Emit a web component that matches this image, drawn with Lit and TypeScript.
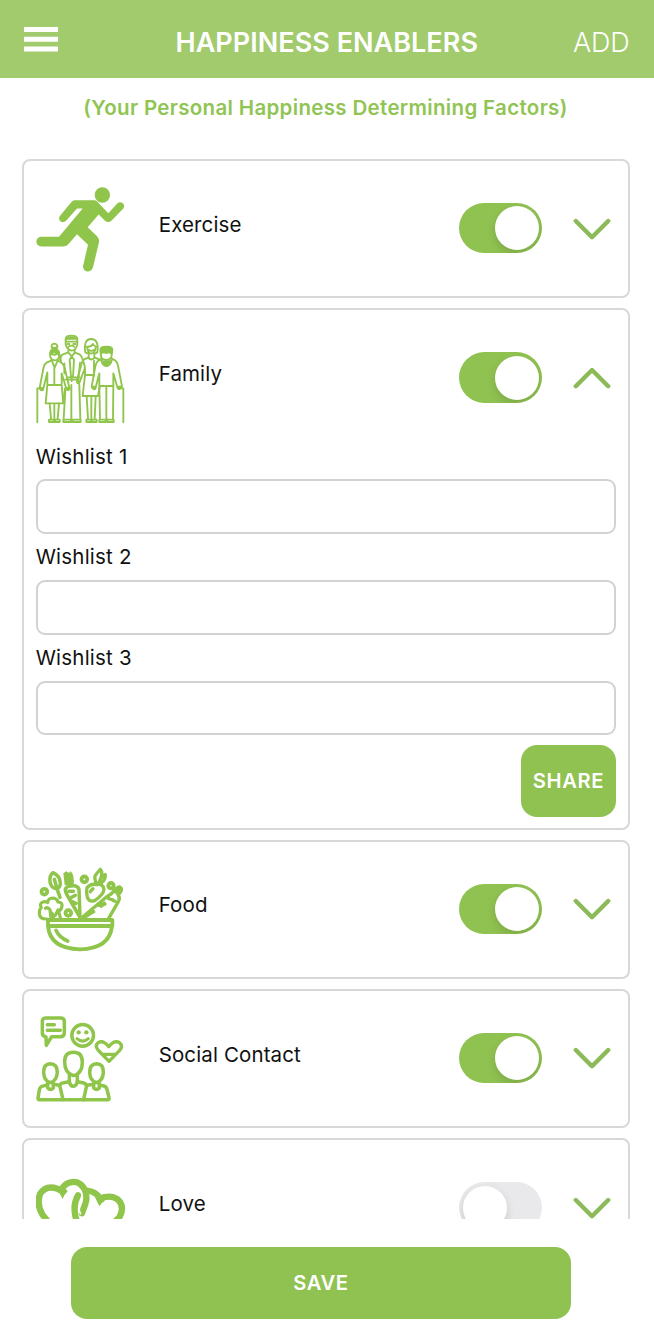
import { LitElement, html, svg, css } from "lit";
import { customElement, property, state } from "lit/decorators.js";
import { classMap } from "lit/directives/class-map.js";

const icons: Record<string, { box: string; art: unknown }> = {
  exercise: {
    box: "48 103.5 270 270",
    art: svg`
      <circle class="fill" cx="247" cy="133.500" r="23"/>
      <path class="fill" d="M163 149H225Q231 151 236 158L265 188L291 160Q298 153 307 157Q316 164 310 174L275 210Q265 219 255 211L236 192L203 230L232 258Q238 265 237 275L219 350Q214 363 203 363Q189 361 189 347L204 283L171 251L145 281Q139 288 129 288H64Q50 287 49 274Q50 261 63 259H117L188 174H171L139 210Q131 218 123 214Q114 207 119 197L155 154Q158 150 163 149Z"/>`,
  },
  family: {
    box: "33 27 270 270",
    art: svg`
      <g class="line" stroke-width="5.600">
        <path d="M37 292V190H48M295 292V190H284"/>
        <path d="M75 90Q74 72 88 72Q103 72 103 90Q102 106 89 106Q76 105 75 90ZM80 68Q78 57 88 56Q98 57 97 68ZM76 85Q88 95 102 83"/>
        <path d="M99 84L107 100M104 90L108 108"/>
        <path d="M80 106L65 113Q58 117 56 126L44 188Q47 198 54 195L67 142V180L62 235H115L110 180V145L124 191Q128 199 134 192L119 128Q116 115 98 107L89 128L80 106ZM67 180H110M88 130V180"/>
        <path d="M74 235L78 281M102 235L98 281M88 237V280M72 284H86V291H72ZM90 284H104V291H90Z"/>
        <path d="M122 42Q122 32 139 32Q157 32 157 42V58Q153 76 140 77Q126 75 122 58ZM122 50H157M131 65Q140 59 148 65M128 57H133M145 57H151"/>
        <path d="M130 76V82L112 89Q107 94 105 104M149 76V82L165 89Q171 94 173 104M130 82L140 94L150 82M140 94L134 104L138 156H144L147 104L140 94"/>
        <path d="M118 115V145M121 164H160M130 157H164M140 156V168M165 113L160 165M121 196L116 281M139 180V281M163 180L166 281M115 284H138V291H115ZM143 284H167V291H143ZM120 190L115 230"/>
        <path d="M181 82Q175 43 198 42Q223 43 217 82L208 87V97L224 104M181 82L191 87V97L176 104M184 65Q198 67 204 57Q207 64 214 65M187 66Q187 84 199 86Q211 84 212 66M192 75Q199 80 206 75"/>
        <path d="M176 104Q170 109 169 119L156 165Q155 175 162 176L180 129V150L173 213H219L224 184M180 150H207M180 129L176 112M207 107V153M190 98Q199 109 209 98"/>
        <path d="M185 215L189 281M212 215L209 281M199 217V280M184 284H198V291H184ZM201 284H215V291H201Z"/>
        <path d="M226 76Q225 65 244 65Q264 65 262 76L259 97Q254 105 244 105Q232 104 229 97ZM226 76Q244 90 262 76"/>
        <path d="M229 101L218 109Q213 114 211 124L200 185Q205 196 211 191L223 145V183L225 281M260 101L270 106Q277 111 279 122L291 184Q284 197 278 190L265 145V183L264 281M223 183H265M244 185V281M229 106Q232 122 244 123Q257 122 260 106"/>
        <path d="M223 284H242V291H223ZM247 284H266V291H247Z"/>
      </g>
      <path class="fill" d="M75 87Q76 73 89 72Q102 74 103 87L98 84L93 88L87 84L81 89ZM122 44V39Q139 29 157 39V44ZM226 88V71Q226 63 244 63Q264 63 264 75L261 90L253 85H236ZM231 104Q244 112 258 103Q257 121 244 122Q233 120 231 104Z"/>
      <circle class="fill" cx="49" cy="191" r="5.500"/><circle class="fill" cx="129" cy="191" r="5.500"/><circle class="fill" cx="160" cy="171" r="5.500"/><circle class="fill" cx="206" cy="187" r="5.500"/><circle class="fill" cx="284" cy="187" r="5.500"/>`,
  },
  food: {
    box: "33 30 270 270",
    art: svg`
      <g class="line" stroke-width="11.500">
        <path d="M69 195H262V213H69ZM69 213Q75 281 165 283Q254 281 261 213"/>
        <path d="M93 226Q103 248 128 258" stroke-width="11"/>
        <circle cx="58" cy="110" r="8.500"/><circle cx="178" cy="73" r="8.500"/><circle cx="258" cy="92" r="8"/><circle cx="130" cy="174" r="8.500"/>
        <path d="M75 81Q73 61 84 53Q106 63 106 85Q106 99 94 101Q78 99 75 81ZM88 73L98 107L105 127" stroke-width="10.500"/>
        <path d="M66 192Q44 193 43 175Q42 164 49 158Q42 145 54 141Q63 138 68 143Q69 129 84 129Q96 130 99 141Q113 142 111 154Q109 165 101 169L107 192M61 160Q68 155 75 164L78 190M81 174L86 190M99 165L91 181" stroke-width="9.500"/>
        <path d="M121 103Q125 91 140 93Q157 90 162 103L165 187L128 123Q120 110 121 103ZM132 109H145M151 121L140 127M142 140L153 145" stroke-width="10.500"/>
        <path d="M186 98Q198 84 216 89Q234 85 237 103Q235 119 209 137Q193 142 187 127Q183 111 186 98ZM214 85Q206 66 212 60Q222 47 226 43Q236 54 224 77M222 84Q228 63 241 59Q242 75 229 84M204 101L196 110" stroke-width="10"/>
        <path d="M174 185L247 124L258 117L276 99Q286 92 288 101Q290 108 279 120Q287 130 280 140L251 190M190 174L206 170M222 151L240 147" stroke-width="10"/>
      </g>
      <path class="fill" d="M265 111L274 98Q284 90 293 98Q297 108 286 118L281 124ZM247 122L258 128Q272 130 278 141L269 144Q258 136 246 134ZM119 90L115 55L124 49L132 54L137 48Q149 61 146 92ZM172 188L202 162L211 172L185 189ZM216 151L240 139L243 148L229 160Z"/>`,
  },
  social: {
    box: "33 29 270 270",
    art: svg`
      <g class="line" stroke-width="10.500">
        <path d="M62 97Q52 96 52 87V50Q53 41 62 41H108Q118 42 118 51V86Q117 97 107 97H80L64 123L63 98ZM67 61H88M67 78H106"/>
        <circle cx="173" cy="93" r="32.500"/>
        <path d="M156 103Q173 118 190 103" stroke-width="9"/>
        <path d="M252 171L219 137Q209 124 219 115Q235 106 251 127Q268 106 284 115Q295 125 284 138ZM232 150H272" stroke-width="10"/>
        <path d="M119 173Q118 144 145 144Q172 144 172 173Q172 208 145 214Q119 206 119 173ZM133 213V231Q136 246 145 246Q155 246 157 231V213"/>
        <path d="M114 286L105 247Q104 236 116 235L133 232M157 232L174 235Q185 237 184 248L176 286"/>
        <path d="M56 204Q55 179 76 178Q97 179 97 204Q95 230 76 235Q57 230 56 204ZM194 204Q194 179 215 178Q236 179 235 204Q234 229 215 235Q195 230 194 204ZM68 237V251Q77 259 85 251V237M206 237V251Q215 259 223 251V237"/>
        <path d="M67 242L50 246Q45 248 43 256L39 282Q39 286 43 286H248Q254 286 252 280L246 255Q244 247 237 245L223 242M85 240L103 243M186 243L206 240"/>
      </g>
      <circle class="fill" cx="161" cy="84" r="6.500"/><circle class="fill" cx="184" cy="84" r="6.500"/>`,
  },
  love: {
    box: "48 102 270 270",
    art: svg`
      <g class="line" stroke-width="19">
        <path d="M137 340L68 255Q49 224 60 192Q78 164 112 176L122 181Q140 150 172 157Q188 164 193 178Q204 200 196 222Q190 237 186 250"/>
        <path d="M211 346Q170 288 165 252Q160 220 174 196M200 182Q228 184 239 205Q272 193 293 208Q316 230 298 262L211 346"/>
      </g>
      <path fill="none" stroke="#fff" stroke-width="5" d="M180 178Q191 196 183 213Q172 232 182 253"/>
      <path class="fill" d="M114 181L128 207Q133 193 143 184L130 169ZM226 204L238 229Q244 218 255 212L241 196Z"/>`,
  },
};

@customElement("enabler-card")
class EnablerCard extends LitElement {
  @property() name = "";
  @property() icon = "";
  @property({ type: Boolean }) on = false;
  @property({ type: Boolean }) open = false;

  static styles = css`
    :host { display: block; flex: none; }
    .card {
      box-sizing: border-box;
      border: 2px solid #d8d8d8;
      border-radius: 8px;
      padding: 0 11.700px;
      height: 139.400px;
    }
    .card.open { height: 521.200px; }
    .row { display: flex; align-items: center; padding-top: 23.500px; height: 90px; }
    .icon { width: 90px; height: 90px; flex: none; }
    .fill { fill: #8fc54a; }
    .line { fill: none; stroke: #8fc54a; stroke-linecap: round; stroke-linejoin: round; }
    .name { flex: 1; padding: 0 0 9.600px 33px; line-height: 26px; letter-spacing: 0.120px; }
    .switch {
      box-sizing: border-box;
      display: flex;
      width: 83px;
      height: 50.400px;
      margin-bottom: 2.500px;
      padding: 3.200px;
      border-radius: 26px;
      background: #e9e9eb;
      overflow: hidden;
      border: 0;
    }
    .switch.on { background: #90c251; justify-content: flex-end; }
    .knob { width: 44px; height: 44px; border-radius: 50%; background: #fff; box-shadow: 0 4px 10px rgba(0, 0, 0, 0.13); }
    .chevron { width: 38px; height: 22px; margin: 0 5.300px 2px 30.700px; flex: none; }
    .chevron path { fill: none; stroke: #8cba58; stroke-width: 4.400; stroke-linecap: round; stroke-linejoin: round; }
    .form { display: flex; flex-direction: column; padding-top: 9.200px; }
    .label { height: 45.700px; padding-top: 0.500px; line-height: 46.200px; letter-spacing: 0.220px; }
    .field {
      box-sizing: border-box;
      width: 100%;
      height: 54.600px;
      border: 2px solid #d2d2d2;
      border-radius: 9px;
      background: #fff;
      font: inherit;
      padding: 0 12px;
      margin: 0;
      outline: none;
    }
    .share {
      align-self: flex-end;
      margin-top: 9.600px;
      width: 95.700px;
      height: 71.600px;
      border: 0;
      border-radius: 16px;
      background: #90c251;
      color: #fff;
      font: 600 20.200px Inter, sans-serif;
      letter-spacing: 0.600px;
      padding: 0;
    }
  `;

  render() {
    const icon = icons[this.icon];
    return html`
      <div class=${classMap({ card: true, open: this.open })}>
        <div class="row">
          <svg class="icon" viewBox=${icon.box}>${icon.art}</svg>
          <span class="name">${this.name}</span>
          <button
            class=${classMap({ switch: true, on: this.on })}
            role="switch"
            @click=${() => (this.on = !this.on)}
          ><span class="knob"></span></button>
          <svg class="chevron" viewBox="0 0 38 22" @click=${() => (this.open = !this.open)}>
            <path d=${this.open ? "M2.8 19.200L19 3L35.200 19.200" : "M2.800 3L19 19.200L35.200 3"}/>
          </svg>
        </div>
        ${this.open
          ? html`<div class="form">
              ${[1, 2, 3].map((n) => html`<label class="label" for="w${n}">Wishlist ${n}</label><input class="field" id="w${n}" />`)}
              <button class="share">SHARE</button>
            </div>`
          : ""}
      </div>
    `;
  }
}

@customElement("app-root")
class AppRoot extends LitElement {
  @state() items = [
    { name: "Exercise", icon: "exercise", on: true, open: false },
    { name: "Family", icon: "family", on: true, open: true },
    { name: "Food", icon: "food", on: true, open: false },
    { name: "Social Contact", icon: "social", on: true, open: false },
    { name: "Love", icon: "love", on: false, open: false },
  ];

  static styles = css`
    :host {
      display: flex;
      flex-direction: column;
      height: 1340px;
      background: #fff;
      color: #111;
      font: 400 20.500px Inter, "Liberation Sans", sans-serif;
      overflow: hidden;
    }
    .header {
      display: grid;
      grid-template-columns: 1fr auto 1fr;
      align-items: center;
      box-sizing: border-box;
      height: 78px;
      flex: none;
      padding: 8px 24.500px 0 24px;
      background: #a1cb6c;
      color: #fff;
      font-size: 27px;
      line-height: 34px;
    }
    .menu { width: 34px; height: 25px; margin-bottom: 8px; }
    .title { font-weight: 560; letter-spacing: 0.030px; }
    .add { font-weight: 300; justify-self: end; letter-spacing: -0.200px; }
    .subtitle {
      flex: none;
      height: 81px;
      box-sizing: border-box;
      padding: 17px 3px 0 0;
      line-height: 26px;
      text-align: center;
      font-size: 20.500px;
      font-weight: 600;
      letter-spacing: 0.330px;
      color: #90c453;
    }
    .list { display: flex; flex-direction: column; gap: 10px; height: 1060px; flex: none; overflow: hidden; padding: 0 24px 0 22px; }
    .save {
      flex: none;
      width: 500px;
      height: 71.500px;
      margin: 28px 0 0 71px;
      border: 0;
      border-radius: 16px;
      background: #90c251;
      color: #fff;
      font: 600 20.200px Inter, sans-serif;
      letter-spacing: 0.600px;
    }
  `;

  render() {
    return html`
      <div class="header">
        <svg class="menu" viewBox="0 0 34 25"><path fill="#fff" d="M0 0H34V5H0ZM0 9.700H34V14.700H0ZM0 19.500H34V24.500H0Z"/></svg>
        <span class="title">HAPPINESS ENABLERS</span>
        <span class="add">ADD</span>
      </div>
      <div class="subtitle">(Your Personal Happiness Determining Factors)</div>
      <div class="list">
        ${this.items.map((i) => html`<enabler-card .name=${i.name} .icon=${i.icon} .on=${i.on} .open=${i.open}></enabler-card>`)}
      </div>
      <button class="save">SAVE</button>
    `;
  }
}
